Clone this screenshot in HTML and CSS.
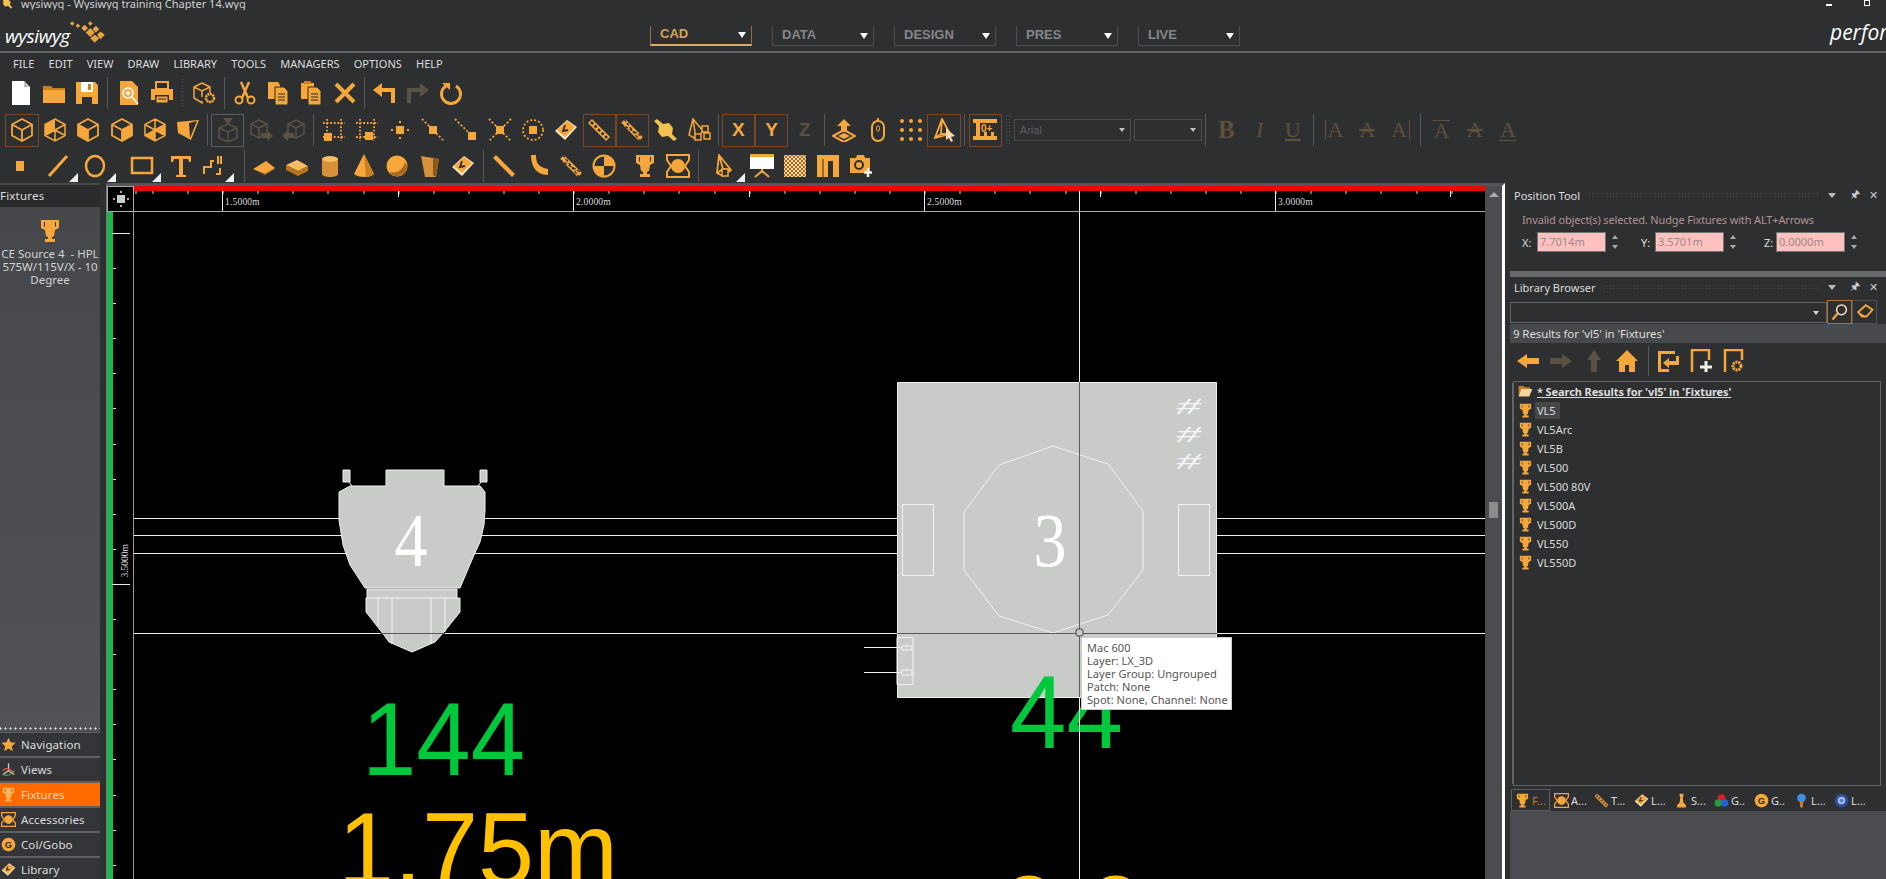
FILE: index.html
```html
<!DOCTYPE html>
<html lang="en">
<head>
<meta charset="utf-8">
<title>wysiwyg - Wysiwyg training Chapter 14.wyg</title>
<link rel="stylesheet" href="styles.css">
</head>
<body>
<svg class="defs" width="0" height="0" aria-hidden="true">
  <symbol id="new" viewBox="0 0 24 24"><path d="M3 0h12l6 6v18H3z" fill="#fff"/><path d="M15 0l6 6h-6z" fill="#bbb"/></symbol>
  <symbol id="folder" viewBox="0 0 24 24"><path d="M1 5h8l2 2h12v3H1z" fill="#c9801f"/><path d="M1 9h22v13H1z" fill="currentColor"/></symbol>
  <symbol id="save" viewBox="0 0 24 24"><path d="M1 1h19l3 3v19H1z" fill="currentColor"/><path d="M6 1h12v10H6z" fill="#fff"/><path d="M7 16h10v7H7z" fill="#2d2f31"/><path d="M13 3h3v6h-3z" fill="#c9801f"/></symbol>
  <symbol id="preview" viewBox="0 0 24 24"><path d="M3 0h12l6 6v18H3z" fill="currentColor"/><circle cx="11" cy="12" r="5" fill="none" stroke="#fff" stroke-width="1.5"/><path d="M15 16l6 7M8.500 12h5M11 9.500v5" stroke="#fff" stroke-width="1.500"/></symbol>
  <symbol id="print" viewBox="0 0 24 24"><path d="M6 1h12v7H6z" fill="none" stroke="currentColor" stroke-width="2"/><path d="M1 8h22v11h-4v-5H5v5H1z" fill="currentColor"/><path d="M6 15h12v7H6z" fill="currentColor" stroke="#2d2f31"/><path d="M8 18h8" stroke="#2d2f31"/></symbol>
  <symbol id="boxgear" viewBox="0 0 24 24"><path d="M10 2l8 4v6M10 2L2 6v11l8 5v-2M2 6l8 4 8-4M10 10v6" fill="none" stroke="currentColor" stroke-width="1.500"/><circle cx="18" cy="17" r="4" fill="none" stroke="currentColor" stroke-width="2.500" stroke-dasharray="2 .6"/></symbol>
  <symbol id="scissors" viewBox="0 0 24 24"><path d="M8 1l7 16M16 1L9 17" stroke="currentColor" stroke-width="2.500"/><circle cx="6" cy="19" r="3.500" fill="none" stroke="currentColor" stroke-width="2"/><circle cx="18" cy="19" r="3.500" fill="none" stroke="currentColor" stroke-width="2"/></symbol>
  <symbol id="copy" viewBox="0 0 24 24"><path d="M2 1h10l2 3v14H2z" fill="currentColor"/><path d="M9 6h9l4 4v14H9z" fill="currentColor" stroke="#2d2f31"/><path d="M12 13h7M12 16h7M12 19h7" stroke="#2d2f31"/></symbol>
  <symbol id="paste" viewBox="0 0 24 24"><path d="M2 2h13v16H2z" fill="currentColor"/><path d="M5 0h7v3H5z" fill="#c9801f"/><path d="M9 6h9l4 4v14H9z" fill="currentColor" stroke="#2d2f31"/><path d="M12 13h7M12 16h7M12 19h7" stroke="#2d2f31"/></symbol>
  <symbol id="close" viewBox="0 0 24 24"><path d="M3 3l18 18M21 3L3 21" stroke="currentColor" stroke-width="4"/></symbol>
  <symbol id="undo" viewBox="0 0 24 24"><path d="M21 22V9H5" fill="none" stroke="currentColor" stroke-width="4"/><path d="M10 2L1 9l9 7z" fill="currentColor"/></symbol>
  <symbol id="redo" viewBox="0 0 24 24"><path d="M3 22V9h16" fill="none" stroke="currentColor" stroke-width="4"/><path d="M14 2l9 7-9 7z" fill="currentColor"/></symbol>
  <symbol id="refresh" viewBox="0 0 24 24"><path d="M7 5a9.500 9.500 0 1 0 10 0" fill="none" stroke="currentColor" stroke-width="3"/><path d="M3 2h8v7z" fill="currentColor"/></symbol>
  <symbol id="cube" viewBox="0 0 24 24"><path d="M12 1l10 5.500v11L12 23 2 17.500v-11zM2 6.500L12 12l10-5.500M12 12v11" fill="none" stroke="currentColor" stroke-width="1.800"/></symbol>
  <symbol id="cubeA" viewBox="0 0 24 24"><path d="M12 1v11L2 17.500v-11z" fill="currentColor"/><path d="M12 1l10 5.500v11L12 23 2 17.500v-11zM12 12L2 6.500M12 12l10-5.500M12 12v11M12 12L2 17.500M12 12l10 5.500" fill="none" stroke="currentColor" stroke-width="1.500"/></symbol>
  <symbol id="cubeB" viewBox="0 0 24 24"><path d="M2 6.500v11L12 23V12z" fill="currentColor"/><path d="M12 1l10 5.500v11L12 23 2 17.500v-11zM2 6.500L12 12l10-5.500M12 12v11" fill="none" stroke="currentColor" stroke-width="1.800"/></symbol>
  <symbol id="cubeC" viewBox="0 0 24 24"><path d="M22 6.500v11L12 23V12z" fill="currentColor"/><path d="M12 1l10 5.500v11L12 23 2 17.500v-11zM2 6.500L12 12l10-5.500M12 12v11" fill="none" stroke="currentColor" stroke-width="1.800"/></symbol>
  <symbol id="cubeD" viewBox="0 0 24 24"><path d="M12 12l10-5.500v11zM12 12L2 17.500 12 23z" fill="currentColor"/><path d="M12 1l10 5.500v11L12 23 2 17.500v-11zM12 12L2 6.500M12 12l10-5.500M12 12v11M12 1v11M12 12L2 17.500M12 12l10 5.500" fill="none" stroke="currentColor" stroke-width="1.500"/></symbol>
  <symbol id="wedge" viewBox="0 0 24 24"><path d="M1 4l22-2-8 20L2 15z" fill="currentColor"/><path d="M13 5l8-2-7 17z" fill="#2d2f31"/></symbol>
  <symbol id="cubeDown" viewBox="0 0 24 24"><path d="M12 6l9 4v10l-9 4-9-4V10zM3 10l9 4 9-4M12 14v10" fill="none" stroke="currentColor" stroke-width="1.500"/><path d="M7 0h10l-5 7z" fill="currentColor"/></symbol>
  <symbol id="cubeRight" viewBox="0 0 24 24"><path d="M10 2l8 4v10l-8 4-8-4V6zM2 6l8 4 8-4M10 10v10" fill="none" stroke="currentColor" stroke-width="1.500"/><path d="M12 15h6v-3l6 6-6 5v-3h-6z" fill="currentColor"/></symbol>
  <symbol id="cubeLeft" viewBox="0 0 24 24"><path d="M14 2l8 4v10l-8 4-8-4V6zM6 6l8 4 8-4M14 10v10" fill="none" stroke="currentColor" stroke-width="1.500"/><path d="M12 15H6v-3l-6 6 6 5v-3h6z" fill="currentColor"/></symbol>
  <symbol id="snapA" viewBox="0 0 24 24"><path d="M5 1v22M19 1v22M1 5h22M1 19h22" stroke="currentColor" stroke-width="1.800" stroke-dasharray="1.800 1.800"/><path d="M2 15h8v8H2z" fill="currentColor"/></symbol>
  <symbol id="snapB" viewBox="0 0 24 24"><path d="M5 1v22M19 1v22M1 5h22M1 19h22" stroke="currentColor" stroke-width="1.800" stroke-dasharray="1.800 1.800"/><path d="M10 14h8v8h-8z" fill="currentColor"/></symbol>
  <symbol id="snapC" viewBox="0 0 24 24"><path d="M8 8h8v8H8z" fill="currentColor"/><path d="M12 3v2M12 19v2M3 12h2M19 12h2" stroke="currentColor" stroke-width="2"/></symbol>
  <symbol id="snapD" viewBox="0 0 24 24"><path d="M1 1l22 22" stroke="currentColor" stroke-width="1.800" stroke-dasharray="2 2"/><path d="M8 8h8v8H8z" fill="currentColor"/></symbol>
  <symbol id="snapE" viewBox="0 0 24 24"><path d="M1 1l16 16" stroke="currentColor" stroke-width="1.800" stroke-dasharray="2 2"/><path d="M14 14h8v8h-8z" fill="currentColor"/></symbol>
  <symbol id="snapF" viewBox="0 0 24 24"><path d="M1 1l22 22M23 1L1 23" stroke="currentColor" stroke-width="1.800" stroke-dasharray="2 2"/><path d="M8 8h8v8H8z" fill="currentColor"/></symbol>
  <symbol id="snapG" viewBox="0 0 24 24"><circle cx="12" cy="12" r="10" fill="none" stroke="currentColor" stroke-width="1.800" stroke-dasharray="2 2"/><path d="M8 8h8v8H8z" fill="currentColor"/></symbol>
  <symbol id="book" viewBox="0 0 24 24"><path d="M1 13L13 2l10 7-12 13z" fill="#f8e7c2"/><path d="M3 12l10-9 8 6-10 10z" fill="currentColor"/><path d="M11 7l-2 6 5-1" fill="none" stroke="#2d2f31" stroke-width="1.800"/></symbol>
  <symbol id="beam" viewBox="0 0 24 24"><path d="M1 5l4-4 18 18-4 4z" fill="currentColor"/><path d="M4 4l16 16" stroke="#2d2f31" stroke-width="2.500" stroke-dasharray="3 2"/></symbol>
  <symbol id="beamX" viewBox="0 0 24 24"><path d="M1 5l4-4 18 18-4 4z" fill="currentColor"/><path d="M4 1l16 22M1 6l22 13" stroke="#2d2f31" stroke-width="1.500" stroke-dasharray="3 2"/></symbol>
  <symbol id="diamond" viewBox="0 0 24 24"><path d="M3 1l6 5 6-1 4 5-1 6 5 5-3 2-6-5-6 1-4-5 1-6-5-5z" fill="#f3c14d"/></symbol>
  <symbol id="cone3" viewBox="0 0 24 24"><path d="M6 1l10 12-7 8zM6 1L2 17l7 4" fill="none" stroke="currentColor" stroke-width="1.500"/><path d="M15 8h6v6h-6zM8 16h6v6H8zM17 15h6v6h-6z" fill="#2d2f31" stroke="currentColor" stroke-width="1.500"/></symbol>
  <symbol id="updown" viewBox="0 0 24 24"><path d="M12 1l7 7h-4v6H9V8H5z" fill="currentColor"/><path d="M1 18l11-6 11 6-11 6z" fill="none" stroke="currentColor" stroke-width="2"/><path d="M6 18l6-3 6 3-6 3z" fill="currentColor"/></symbol>
  <symbol id="mouse" viewBox="0 0 24 24"><rect x="6" y="3" width="12" height="20" rx="6" fill="none" stroke="currentColor" stroke-width="2"/><path d="M12 0v3" stroke="currentColor" stroke-width="2"/><rect x="10.500" y="8" width="3" height="5" rx="1.500" fill="none" stroke="currentColor"/></symbol>
  <symbol id="dotsgrid" viewBox="0 0 24 24"><g fill="currentColor"><circle cx="3" cy="3" r="2"/><circle cx="12" cy="3" r="2"/><circle cx="21" cy="3" r="2"/><circle cx="3" cy="12" r="2"/><circle cx="12" cy="12" r="2"/><circle cx="21" cy="12" r="2"/><circle cx="3" cy="21" r="2"/><circle cx="12" cy="21" r="2"/><circle cx="21" cy="21" r="2"/></g></symbol>
  <symbol id="conept" viewBox="0 0 24 24"><path d="M10 1l8 15-15 4zM10 1L9 16l-6 4M9 16l9 0" fill="none" stroke="currentColor" stroke-width="1.800"/><path d="M14 10l9 8-4 1 2 4-2 1-2-4-3 2z" fill="#f8d9a5"/></symbol>
  <symbol id="numbered" viewBox="0 0 24 24"><path d="M0 1h24v4H0zM0 18h24v4H0zM3 5h4v13H3zM18 14h3v4h-3zM11 14h3v4h-3z" fill="currentColor"/><text x="8" y="14" font-size="10" font-weight="700" font-family="Liberation Sans" fill="currentColor">0+</text></symbol>
  <symbol id="square" viewBox="0 0 24 24"><path d="M8 7h8v10H8z" fill="currentColor"/></symbol>
  <symbol id="line" viewBox="0 0 24 24"><path d="M3 22L21 2" stroke="currentColor" stroke-width="3"/></symbol>
  <symbol id="ellipse" viewBox="0 0 24 24"><ellipse cx="11" cy="12" rx="9" ry="10" fill="none" stroke="currentColor" stroke-width="2.500"/></symbol>
  <symbol id="rect" viewBox="0 0 24 24"><path d="M2 4h20v15H2z" fill="none" stroke="currentColor" stroke-width="2.500"/></symbol>
  <symbol id="tee" viewBox="0 0 24 24"><path d="M2 2h20v6h-2l-1-3h-5v16h3v2H7v-2h3V5H5L4 8H2z" fill="currentColor"/></symbol>
  <symbol id="dims" viewBox="0 0 24 24"><path d="M2 20v-7h7V7h3M18 14v6h-4M16 2v8M19 2v8" fill="none" stroke="currentColor" stroke-width="2"/></symbol>
  <symbol id="plane" viewBox="0 0 24 24"><path d="M1 15L14 7l9 7-10 6z" fill="currentColor"/><path d="M1 15l12 5 10-6v1l-10 6z" fill="#a86a1a"/></symbol>
  <symbol id="slab" viewBox="0 0 24 24"><path d="M1 11l11-5 11 6-10 5z" fill="#f7bd62"/><path d="M1 11l12 6v5L1 16zM13 17l10-5v5l-10 5z" fill="#b7751f"/></symbol>
  <symbol id="cyl" viewBox="0 0 24 24"><path d="M4 5v15c0 4 16 4 16 0V5z" fill="#d6913a"/><ellipse cx="12" cy="5" rx="8" ry="3" fill="#f7bd62"/></symbol>
  <symbol id="cone" viewBox="0 0 24 24"><path d="M12 0l10 20c-4 4-16 4-20 0z" fill="currentColor"/><path d="M12 0l2 23c4 0 6-1 8-3z" fill="#c9801f"/></symbol>
  <symbol id="sphere" viewBox="0 0 24 24"><circle cx="12" cy="12" r="10.500" fill="currentColor"/><path d="M22 12A10 10 0 0 1 4 18c8 2 14-2 16-10z" fill="#a86a1a"/></symbol>
  <symbol id="wall" viewBox="0 0 24 24"><path d="M3 2l12 2 6 1-3 18H7z" fill="#d6913a"/><path d="M15 4l6 1-3 18-3-2z" fill="#8c5a18"/></symbol>
  <symbol id="curve" viewBox="0 0 24 24"><path d="M5 1h5c0 8 2 12 12 14v6C10 21 5 12 5 1z" fill="currentColor"/></symbol>
  <symbol id="barline" viewBox="0 0 24 24"><path d="M1 4l3-3 19 19-3 3z" fill="currentColor"/></symbol>
  <symbol id="target" viewBox="0 0 24 24"><circle cx="12" cy="12" r="10.500" fill="none" stroke="currentColor" stroke-width="2"/><path d="M12 12V2a10 10 0 0 1 10 10zM12 12v10A10 10 0 0 1 2 12z" fill="currentColor"/></symbol>
  <symbol id="trophy" viewBox="0 0 24 24"><path d="M3 1h18v8l-4 2-1 6-2 1v2h3v3H7v-3h3v-2l-2-1-1-6-4-2z" fill="currentColor"/><path d="M6 3v4l1 1V3zM18 3v4l-1 1V3z" fill="#2d2f31"/></symbol>
  <symbol id="fixture" viewBox="0 0 24 24"><path d="M1 1h22v5l-4 6 4 6v5H1v-5l4-6-4-6z" fill="none" stroke="currentColor" stroke-width="2"/><circle cx="12" cy="12" r="7" fill="currentColor"/></symbol>
  <symbol id="ptr" viewBox="0 0 24 24"><path d="M5 1l12 15-8 6-6-3zM5 1l4 14-6 4M9 15l8 1" fill="none" stroke="currentColor" stroke-width="1.800"/><path d="M8 15h6v7H8z" fill="#2d2f31" stroke="currentColor" stroke-width="1.500"/></symbol>
  <symbol id="screen" viewBox="0 0 24 24"><path d="M0 1h24v14H0z" fill="#fff"/><path d="M0 0h24v2H0zM12 15v4M12 17l-7 6M12 17l7 6" stroke="currentColor" stroke-width="2" fill="none"/></symbol>
  <symbol id="checker" viewBox="0 0 24 24"><defs><pattern id="chk" width="4" height="4" patternUnits="userSpaceOnUse"><path d="M0 0h4v4H0z" fill="#f8d9a5"/><path d="M0 0h2v2H0zM2 2h2v2H2z" fill="#a86a1a"/></pattern></defs><path d="M1 1h22v22H1z" fill="url(#chk)"/></symbol>
  <symbol id="door" viewBox="0 0 24 24"><path d="M1 1h22v22h-6V7h-5v16H1z" fill="currentColor"/><path d="M7 5v18" stroke="#2d2f31"/></symbol>
  <symbol id="camera" viewBox="0 0 24 24"><path d="M1 4h6l1-3h7l1 3h5v15H1z" fill="currentColor"/><circle cx="10" cy="11" r="4" fill="none" stroke="#2d2f31" stroke-width="2"/><path d="M19 14v9M15 18.500h8" stroke="#f3f0e8" stroke-width="2.500"/></symbol>
  <symbol id="star" viewBox="0 0 24 24"><path d="M12 1l3.300 7.500 8 .8-6 5.300 1.800 8L12 18.500 4.900 22.600l1.800-8-6-5.300 8-.8z" fill="currentColor"/></symbol>
  <symbol id="views" viewBox="0 0 24 24"><path d="M12 2v12M12 14L3 20M12 14l9 6" stroke="#ccc" stroke-width="2"/><path d="M3 14c5-6 13-4 18 6" fill="none" stroke="#e54" stroke-width="2"/><path d="M3 20c5 2 13 2 18-6" fill="none" stroke="#4b4" stroke-width="2"/></symbol>
  <symbol id="gobo" viewBox="0 0 24 24"><circle cx="12" cy="12" r="11" fill="currentColor"/><text x="12" y="17" font-size="15" font-weight="700" text-anchor="middle" font-family="Liberation Sans" fill="#2d2f31">G</text></symbol>
  <symbol id="pawn" viewBox="0 0 24 24"><path d="M9 1h6v4l-1 2 1 8 4 4v4H5v-4l4-4 1-8-1-2z" fill="currentColor"/></symbol>
  <symbol id="rgb" viewBox="0 0 24 24"><circle cx="12" cy="8" r="6" fill="#e21d1d"/><circle cx="7" cy="16" r="6" fill="#2a9a3a"/><circle cx="17" cy="16" r="6" fill="#2560d8"/></symbol>
  <symbol id="bulb" viewBox="0 0 24 24"><circle cx="12" cy="8" r="7" fill="#3e8fe0"/><path d="M9 13h6l-1 10h-4z" fill="#c9801f"/></symbol>
  <symbol id="lens" viewBox="0 0 24 24"><circle cx="12" cy="12" r="11" fill="#2c4f9a"/><circle cx="12" cy="12" r="6" fill="#a9bde6"/><circle cx="12" cy="12" r="3" fill="#5d7fc5"/></symbol>
  <symbol id="arrowL" viewBox="0 0 24 24"><path d="M1 12l10-7v4h12v6H11v4z" fill="currentColor"/></symbol>
  <symbol id="arrowR" viewBox="0 0 24 24"><path d="M23 12l-10-7v4H1v6h12v4z" fill="currentColor"/></symbol>
  <symbol id="arrowU" viewBox="0 0 24 24"><path d="M12 1l7 10h-4v12H9V11H5z" fill="currentColor"/></symbol>
  <symbol id="home" viewBox="0 0 24 24"><path d="M12 1L1 12h3v11h6v-7h4v7h6V12h3z" fill="currentColor"/></symbol>
  <symbol id="libIn" viewBox="0 0 24 24"><path d="M2 2h17v3H5v15h8v3H2z" fill="currentColor"/><path d="M20 7h3v9H13v3l-6-5 6-5v3h7z" fill="currentColor"/></symbol>
  <symbol id="libNew" viewBox="0 0 24 24"><path d="M3 23V1h17v10" fill="none" stroke="currentColor" stroke-width="2.500"/><path d="M17 12v11M11 18h12" stroke="#f3f0e8" stroke-width="3"/></symbol>
  <symbol id="libGear" viewBox="0 0 24 24"><path d="M3 23V1h17v10" fill="none" stroke="currentColor" stroke-width="2.500"/><circle cx="15" cy="17" r="4" fill="none" stroke="currentColor" stroke-width="3" stroke-dasharray="2 .8"/></symbol>
  <symbol id="search" viewBox="0 0 24 24"><circle cx="14" cy="9" r="6.500" fill="none" stroke="#f3e1c2" stroke-width="2"/><path d="M9 14l-7 8" stroke="currentColor" stroke-width="3"/></symbol>
  <symbol id="eraser" viewBox="0 0 24 24"><path d="M3 12L13 3l9 6-8 9H8z" fill="none" stroke="currentColor" stroke-width="2.500"/><path d="M3 12l11 6-6 0z" fill="currentColor"/></symbol>
  <symbol id="folderOpen" viewBox="0 0 24 24"><path d="M1 3h8l2 2h8v3H5L1 20z" fill="#c9801f"/><path d="M5 8h18l-5 12H1z" fill="#f7d59a"/></symbol>
</svg>

<header class="titlebar">
  <svg class="app-mini"><use href="#diamond"/></svg>
  <span class="title-text">wysiwyg - Wysiwyg training Chapter 14.wyg</span>
  <span class="winbtns"><i class="win-min"></i><i class="win-rest"></i></span>
</header>

<div class="brandbar">
  <div class="logo">
    <span class="logo-text">wysiwyg</span>
    <svg class="logo-mark" viewBox="0 0 32 22">
      <path fill="#e9a441" d="M0 3l2-2 2 2-2 2zM5 5l2-2 2 2-2 2zM10 7l3-3 3 3-3 3zM16 3l2-2 2 2-2 2zM14 11l4-4 4 4-4 4zM20 8l3-3 3 3-3 3zM24 13l3-3 4 3-4 4zM18 16l4-3 4 3-4 4z"/>
    </svg>
  </div>
  <nav class="modes">
    <div class="mode active"><span>CAD</span><i class="mode-arrow"></i></div>
    <div class="mode"><span>DATA</span><i class="mode-arrow"></i></div>
    <div class="mode"><span>DESIGN</span><i class="mode-arrow"></i></div>
    <div class="mode"><span>PRES</span><i class="mode-arrow"></i></div>
    <div class="mode"><span>LIVE</span><i class="mode-arrow"></i></div>
  </nav>
  <div class="brand-right">perfor</div>
</div>

<nav class="menubar">
  <span>FILE</span><span>EDIT</span><span>VIEW</span><span>DRAW</span><span>LIBRARY</span><span>TOOLS</span><span>MANAGERS</span><span>OPTIONS</span><span>HELP</span>
</nav>

<div class="toolbar row1">
  <div class="cell"><svg class="ic"><use href="#new"/></svg></div>
  <div class="cell"><svg class="ic"><use href="#folder"/></svg></div>
  <div class="cell"><svg class="ic"><use href="#save"/></svg></div>
  <div class="sep w8"></div>
  <div class="cell"><svg class="ic"><use href="#preview"/></svg></div>
  <div class="cell"><svg class="ic"><use href="#print"/></svg></div>
  <div class="grip g9"></div>
  <div class="cell"><svg class="ic"><use href="#boxgear"/></svg></div>
  <div class="sep w8"></div>
  <div class="cell"><svg class="ic"><use href="#scissors"/></svg></div>
  <div class="cell"><svg class="ic"><use href="#copy"/></svg></div>
  <div class="cell"><svg class="ic"><use href="#paste"/></svg></div>
  <div class="cell"><svg class="ic"><use href="#close"/></svg></div>
  <div class="sep"></div>
  <div class="cell"><svg class="ic"><use href="#undo"/></svg></div>
  <div class="cell dim"><svg class="ic"><use href="#redo"/></svg></div>
  <div class="cell"><svg class="ic"><use href="#refresh"/></svg></div>
</div>

<div class="toolbar row2">
  <div class="cell boxed"><svg class="ic"><use href="#cube"/></svg></div>
  <div class="cell"><svg class="ic"><use href="#cubeA"/></svg></div>
  <div class="cell"><svg class="ic"><use href="#cubeB"/></svg></div>
  <div class="cell"><svg class="ic"><use href="#cubeC"/></svg></div>
  <div class="cell"><svg class="ic"><use href="#cubeD"/></svg></div>
  <div class="cell"><svg class="ic"><use href="#wedge"/></svg></div>
  <div class="sep"></div>
  <div class="cell dim boxed-gray"><svg class="ic"><use href="#cubeDown"/></svg></div>
  <div class="cell dim"><svg class="ic"><use href="#cubeRight"/></svg></div>
  <div class="cell dim"><svg class="ic"><use href="#cubeLeft"/></svg></div>
  <div class="sep"></div>
  <div class="cell"><svg class="ic"><use href="#snapA"/></svg></div>
  <div class="cell"><svg class="ic"><use href="#snapB"/></svg></div>
  <div class="cell"><svg class="ic"><use href="#snapC"/></svg></div>
  <div class="cell"><svg class="ic"><use href="#snapD"/></svg></div>
  <div class="cell"><svg class="ic"><use href="#snapE"/></svg></div>
  <div class="cell"><svg class="ic"><use href="#snapF"/></svg></div>
  <div class="cell"><svg class="ic"><use href="#snapG"/></svg></div>
  <div class="cell"><svg class="ic"><use href="#book"/></svg></div>
  <div class="cell boxed"><svg class="ic"><use href="#beam"/></svg></div>
  <div class="cell boxed"><svg class="ic"><use href="#beamX"/></svg></div>
  <div class="cell"><svg class="ic"><use href="#diamond"/></svg></div>
  <div class="cell"><svg class="ic"><use href="#cone3"/></svg></div>
  <div class="sep"></div>
  <div class="cell boxed letter">X</div>
  <div class="cell boxed letter">Y</div>
  <div class="cell letter dim">Z</div>
  <div class="sep"></div>
  <div class="cell"><svg class="ic"><use href="#updown"/></svg></div>
  <div class="cell"><svg class="ic"><use href="#mouse"/></svg></div>
  <div class="cell"><svg class="ic"><use href="#dotsgrid"/></svg></div>
  <div class="cell boxed"><svg class="ic"><use href="#conept"/></svg></div>
  <div class="sep w8"></div>
  <div class="cell boxed"><svg class="ic"><use href="#numbered"/></svg></div>
  <div class="grip g12"></div>
  <div class="select font"><span>Arial</span><i></i></div>
  <div class="select size"><span></span><i></i></div>
  <div class="sep w8"></div>
  <div class="cell serif bold">B</div>
  <div class="cell serif ital">I</div>
  <div class="cell serif under">U</div>
  <div class="sep w8"></div>
  <div class="cell serif"><span class="a-left">A</span></div>
  <div class="cell serif"><span class="a-mid">A</span></div>
  <div class="cell serif"><span class="a-right">A</span></div>
  <div class="sep w8"></div>
  <div class="cell serif"><span class="a-top">A</span></div>
  <div class="cell serif"><span class="a-strike">A</span></div>
  <div class="cell serif"><span class="a-bottom">A</span></div>
</div>

<div class="toolbar row3">
  <div class="cell"><svg class="ic"><use href="#square"/></svg></div>
  <div class="cell m5 tri"><svg class="ic"><use href="#line"/></svg></div>
  <div class="cell m5 tri"><svg class="ic"><use href="#ellipse"/></svg></div>
  <div class="cell m12 tri"><svg class="ic"><use href="#rect"/></svg></div>
  <div class="cell m6"><svg class="ic"><use href="#tee"/></svg></div>
  <div class="cell tri"><svg class="ic"><use href="#dims"/></svg></div>
  <div class="sep w17"></div>
  <div class="cell"><svg class="ic"><use href="#plane"/></svg></div>
  <div class="cell"><svg class="ic"><use href="#slab"/></svg></div>
  <div class="cell"><svg class="ic"><use href="#cyl"/></svg></div>
  <div class="cell"><svg class="ic"><use href="#cone"/></svg></div>
  <div class="cell"><svg class="ic"><use href="#sphere"/></svg></div>
  <div class="cell"><svg class="ic"><use href="#wall"/></svg></div>
  <div class="cell"><svg class="ic"><use href="#book"/></svg></div>
  <div class="sep w8"></div>
  <div class="cell"><svg class="ic"><use href="#barline"/></svg></div>
  <div class="cell"><svg class="ic"><use href="#curve"/></svg></div>
  <div class="cell"><svg class="ic"><use href="#beamX"/></svg></div>
  <div class="cell"><svg class="ic"><use href="#target"/></svg></div>
  <div class="cell m8"><svg class="ic"><use href="#trophy"/></svg></div>
  <div class="cell"><svg class="ic"><use href="#fixture"/></svg></div>
  <div class="sep w8"></div>
  <div class="cell m6 tri"><svg class="ic"><use href="#ptr"/></svg></div>
  <div class="cell m3"><svg class="ic"><use href="#screen"/></svg></div>
  <div class="cell"><svg class="ic"><use href="#checker"/></svg></div>
  <div class="cell"><svg class="ic"><use href="#door"/></svg></div>
  <div class="cell"><svg class="ic"><use href="#camera"/></svg></div>
</div>

<main class="workspace">
  <aside class="left">
    <div class="left-head">Fixtures</div>
    <div class="left-info">
      <svg class="left-ic"><use href="#trophy"/></svg>
      <p>CE Source 4 &nbsp;- HPL 575W/115V/X - 10 Degree</p>
    </div>
    <div class="left-grip"></div>
    <div class="navbtn"><svg><use href="#star"/></svg>Navigation</div>
    <div class="navbtn"><svg><use href="#views"/></svg>Views</div>
    <div class="navbtn on"><svg><use href="#trophy"/></svg>Fixtures</div>
    <div class="navbtn"><svg><use href="#fixture"/></svg>Accessories</div>
    <div class="navbtn"><svg><use href="#gobo"/></svg>Col/Gobo</div>
    <div class="navbtn"><svg><use href="#book"/></svg>Library</div>
  </aside>

  <section class="canvas">
    <div class="corner"><i></i></div>
    <div class="hruler">
      <div class="hticks"></div>
      <span class="mark" style="left:88px"></span><span class="lab" style="left:91px">1.5000m</span>
      <span class="mark" style="left:439px"></span><span class="lab" style="left:442px">2.0000m</span>
      <span class="mark" style="left:790px"></span><span class="lab" style="left:793px">2.5000m</span>
      <span class="mark" style="left:1141px"></span><span class="lab" style="left:1144px">3.0000m</span>
      <span class="mid" style="left:264px"></span><span class="mid" style="left:615px"></span><span class="mid" style="left:966px"></span><span class="mid" style="left:1316px"></span>
      <span class="mark" style="left:945px"></span>
    </div>
    <div class="scroll"><i class="sc-up"></i><i class="sc-thumb"></i></div>
    <div class="vruler">
      <div class="vticks"></div>
      <span class="vmark" style="top:21px"></span>
      <span class="vmark" style="top:372px"></span>
      <span class="vlab">3.5000m</span>
    </div>
    <svg class="view" viewBox="134 212 1351 667">
      <g class="wire">
        <path d="M134 518.500H1485M134 535.500H1485M134 553.500H1485M134 633.500H1485"/>
      </g>
      <g class="fix">
        <path d="M343 470h7v12h-7zM480 470h7v12h-7z"/>
        <path d="M339 492l11-6h36v-16h58v16h36l5 6v18l-1 15-4 17-6 13-14 33H365l-15-23-7-20-4-25z"/>
        <path d="M367 589h90v9h3v14l-16 20-9 10-23 10-23-10-5-7-18-23v-14h1z"/>
      </g>
      <g class="thin">
        <path d="M378 598v28M392 598v46M431 598v46M445 598v34M367 598h90M349 482l3 4M481 482l-3 4"/>
      </g>
      <path class="dark" d="M380 633.500h65"/>
      <text class="num" x="411" y="566" text-anchor="middle" font-size="77" textLength="33" lengthAdjust="spacingAndGlyphs">4</text>

      <path class="fix" d="M897.500 382.500h319v315h-319z"/>
      <path class="thin" d="M902.500 504.500h31v71h-31zM1178.500 504.500h31v71h-31zM1053 446l55 18 35 47v59l-35 45-55 18-54-17-35-46v-58l35-47zM897 637.500h16v47h-16zM864 647.500h38M864 672.500h38M902 646h10v4h-10zM902 670h10v5h-10z"/>
      <text class="num" x="1050" y="566" text-anchor="middle" font-size="77" textLength="33" lengthAdjust="spacingAndGlyphs">3</text>
      <text class="hash" x="1176" y="414" textLength="25" lengthAdjust="spacingAndGlyphs">#</text>
      <text class="hash" x="1176" y="442" textLength="25" lengthAdjust="spacingAndGlyphs">#</text>
      <text class="hash" x="1176" y="469" textLength="25" lengthAdjust="spacingAndGlyphs">#</text>
      <path class="dark" d="M897 633.500h320"/>
      <text class="big green" x="362" y="775" textLength="163" lengthAdjust="spacingAndGlyphs">144</text>
      <text class="big green" x="1010" y="748" textLength="113" lengthAdjust="spacingAndGlyphs">44</text>
      <text class="big amber" x="338" y="885" textLength="280" lengthAdjust="spacingAndGlyphs">1.75m</text>
      <text class="big amber" x="1000" y="948">0.0</text>
      <path class="wire" d="M1079.500 212V382M1079.500 697V879"/>
      <path class="dark" d="M1079.500 382v315"/>
      <rect class="cursor" x="1076" y="629" width="7" height="7" rx="2"/>
    </svg>
    <div class="tooltip">Mac 600<br>Layer: LX_3D<br>Layer Group: Ungrouped<br>Patch: None<br>Spot: None, Channel: None</div>
  </section>

  <aside class="right">
    <div class="dock-head"><span>Position Tool</span><i class="dock-dots"></i><i class="dock-menu"></i><b class="dock-pin">&#x1F588;</b><b class="dock-x">&#x2715;</b></div>
    <p class="invalid">Invalid object(s) selected. Nudge Fixtures with ALT+Arrows</p>
    <div class="fields">
      <label class="fx">X:</label><span class="inp">7.7014m</span><i class="spin"></i>
      <label class="fy">Y:</label><span class="inp">3.5701m</span><i class="spin"></i>
      <label class="fz">Z:</label><span class="inp">0.0000m</span><i class="spin"></i>
    </div>
    <div class="splitter"></div>
    <div class="dock-head lib"><span>Library Browser</span><i class="dock-dots"></i><i class="dock-menu"></i><b class="dock-pin">&#x1F588;</b><b class="dock-x">&#x2715;</b></div>
    <div class="searchrow">
      <div class="searchbox"><i></i></div>
      <div class="sbtn on"><svg><use href="#search"/></svg></div>
      <div class="sbtn"><svg><use href="#eraser"/></svg></div>
    </div>
    <div class="results">9 Results for 'vl5' in 'Fixtures'</div>
    <div class="libnav">
      <svg class="lb a"><use href="#arrowL"/></svg>
      <svg class="lb b dim"><use href="#arrowR"/></svg>
      <svg class="lb c dim"><use href="#arrowU"/></svg>
      <svg class="lb d"><use href="#home"/></svg>
      <i class="libsep"></i>
      <svg class="lb e"><use href="#libIn"/></svg>
      <svg class="lb f"><use href="#libNew"/></svg>
      <svg class="lb g"><use href="#libGear"/></svg>
    </div>
    <div class="tree">
      <div class="tree-head"><svg><use href="#folderOpen"/></svg><span>* Search Results for 'vl5' in 'Fixtures'</span></div>
      <div class="tree-item"><svg><use href="#trophy"/></svg><span class="sel">VL5</span></div>
      <div class="tree-item"><svg><use href="#trophy"/></svg><span>VL5Arc</span></div>
      <div class="tree-item"><svg><use href="#trophy"/></svg><span>VL5B</span></div>
      <div class="tree-item"><svg><use href="#trophy"/></svg><span>VL500</span></div>
      <div class="tree-item"><svg><use href="#trophy"/></svg><span>VL500 80V</span></div>
      <div class="tree-item"><svg><use href="#trophy"/></svg><span>VL500A</span></div>
      <div class="tree-item"><svg><use href="#trophy"/></svg><span>VL500D</span></div>
      <div class="tree-item"><svg><use href="#trophy"/></svg><span>VL550</span></div>
      <div class="tree-item"><svg><use href="#trophy"/></svg><span>VL550D</span></div>
    </div>
    <div class="tabs">
      <div class="tab on"><svg><use href="#trophy"/></svg><span>F...</span></div>
      <div class="tab"><svg><use href="#fixture"/></svg><span>A...</span></div>
      <div class="tab"><svg><use href="#beam"/></svg><span>T...</span></div>
      <div class="tab"><svg><use href="#book"/></svg><span>L...</span></div>
      <div class="tab"><svg><use href="#pawn"/></svg><span>S...</span></div>
      <div class="tab"><svg><use href="#rgb"/></svg><span>G..</span></div>
      <div class="tab"><svg><use href="#gobo"/></svg><span>G..</span></div>
      <div class="tab"><svg><use href="#bulb"/></svg><span>L...</span></div>
      <div class="tab"><svg><use href="#lens"/></svg><span>L...</span></div>
    </div>
    <div class="tabfill"></div>
  </aside>
</main>
</body>
</html>
```
FILE: styles.css
```css
* { box-sizing: border-box; }
html, body { margin: 0; padding: 0; }
body {
  width: 1886px; height: 879px; overflow: hidden;
  display: flex; flex-direction: column;
  background: #2d2f31; color: #d8d8d8;
  font-family: "Noto Sans", "Liberation Sans", sans-serif;
  font-size: 11px;
}
.defs { position: absolute; }
i { display: block; }

.titlebar { height: 10px; flex: none; display: flex; align-items: center; overflow: hidden; position: relative; }
.app-mini { width: 12px; height: 12px; color: #e9a441; margin: -4px 8px 0 1px; flex: none; }
.title-text { font-size: 11px; line-height: 10px; color: #d0d0d0; margin-top: -2px; }
.winbtns { margin-left: auto; display: flex; gap: 32px; padding-right: 16px; align-items: center; }
.win-min { width: 6px; height: 2px; background: #fff; margin-top: 0; }
.win-rest { width: 6px; height: 6px; border: 1px solid #fff; margin-top: -4px; }

.brandbar { height: 43px; flex: none; display: grid; grid-template-columns: 650px 590px 590px 1fr; border-bottom: 2px solid #626466; overflow: hidden; }
.logo { display: flex; align-items: flex-start; padding: 15px 0 0 5px; }
.logo-text { font-style: italic; font-size: 19px; line-height: 22px; color: #fff; letter-spacing: -.4px; font-family: "Open Sans", sans-serif; }
.logo-mark { width: 36px; height: 25px; margin: -5px 0 0 0; }
.modes { display: flex; gap: 20px; align-items: flex-start; padding-top: 16px; }
.mode { width: 102px; height: 20px; flex: none; border: 1px solid #4c4e50; border-top: 0; display: flex; justify-content: space-between; align-items: center; padding: 0 5px 0 9px; font: 700 13px "Liberation Sans", sans-serif; color: #85878a; }
.mode span { margin-top: -3px; }
.mode.active { color: #d9a35a; border-color: #8d7048; border-bottom: 2px solid #e0aa62; }
.mode-arrow { width: 0; height: 0; border: 4px solid transparent; border-top: 6px solid #fff; border-bottom: 0; }
.brand-right { grid-column: 4; font: italic 21px/24px "Open Sans", sans-serif; color: #fff; padding-top: 10px; white-space: nowrap; }

.menubar { height: 22px; flex: none; display: flex; align-items: center; padding: 0 0 2px 8px; font-size: 11px; color: #dcdcdc; }
.menubar span { padding: 0 5px; margin-right: 4.2px; }

.toolbar { flex: none; display: flex; align-items: center; color: #f5a73b; }
.row1 { height: 36px; padding-left: 4.4px; }
.row2 { height: 38px; padding-left: 5.4px; }
.row3 { height: 34px; padding-left: 3.4px; }
.cell { width: 33.2px; height: 33px; flex: none; display: flex; align-items: center; justify-content: center; position: relative; }
.ic { width: 24px; height: 24px; display: block; }
.dim { color: #5b5246; }
.boxed { border: 1px solid #7b4826; }
.boxed-gray { border: 1px solid #5c5e60; }
.letter { font: 700 19px "Liberation Sans", sans-serif; color: #f5a73b; }
.letter.dim { color: #5b5246; }
.sep { width: 6.5px; height: 32px; flex: none; display: flex; justify-content: center; }
.sep::before { content: ""; width: 1px; height: 100%; background: #56585a; }
.w8 { width: 8px; }
.w17 { width: 17px; justify-content: flex-end; padding-right: 3px; }
.m3 { margin-left: 3px; }
.m5 { margin-left: 5px; }
.m6 { margin-left: 6px; }
.m8 { margin-left: 8px; }
.m12 { margin-left: 12px; }
.tri::after { content: ""; position: absolute; right: -3px; bottom: 1px; width: 0; height: 0; border-left: 9px solid transparent; border-bottom: 9px solid #f0f0f0; }
.grip { height: 30px; flex: none; background: radial-gradient(circle, #55575a 0.8px, transparent 1px) 0 0 / 3px 3px; }
.g9 { width: 9px; background-clip: content-box; padding: 0 2px; }
.g12 { width: 12px; background-clip: content-box; padding: 0 3px 0 2px; }
.select { height: 22px; flex: none; border: 1px solid #4a4c4e; display: flex; align-items: center; justify-content: space-between; padding: 0 5px; color: #5c5e61; font: 11px "Liberation Sans", sans-serif; }
.select i { width: 0; height: 0; border: 3px solid transparent; border-top: 4px solid #c0c0c0; border-bottom: 0; }
.font { width: 117px; margin-right: 3px; }
.size { width: 68px; }
.serif { font: 400 22px "Liberation Serif", serif; color: #5f5039; }
.bold { font-weight: 700; font-size: 25px; }
.ital { font-style: italic; font-size: 22px; }
.under { text-decoration: underline; }
.a-left { border-left: 1px solid; padding-left: 2px; line-height: 20px; }
.a-right { border-right: 1px solid; padding-right: 2px; line-height: 20px; }
.a-mid { text-decoration: line-through; }
.a-top { border-top: 1px solid; padding: 0 1px; line-height: 20px; }
.a-strike { text-decoration: line-through; }
.a-bottom { border-bottom: 1px solid; padding: 0 1px; line-height: 20px; }

.workspace { flex: 1; min-height: 0; display: flex; }
.left { width: 100px; margin-right: 6px; flex: none; display: flex; flex-direction: column; gap: 2px; background: #47494c; overflow: hidden; }
.left-head { height: 22px; margin-top: 2px; margin-bottom: -2px; flex: none; background: #2a2b2d; line-height: 22px; color: #ddd; padding-left: 0; font-size: 11.5px; letter-spacing: .2px; }
.left-info { flex: 1; text-align: center; padding-top: 9px; background: linear-gradient(#45474a, #515356); }
.left-ic { width: 24px; height: 30px; color: #f5a73b; display: block; margin: 0 auto 1px; }
.left-info p { margin: 0; font-size: 11.5px; line-height: 13px; color: #d4d4d4; padding: 0 1px; }
.left-grip { height: 5px; margin-top: -7px; flex: none; background: radial-gradient(circle, #ddd .9px, transparent 1.2px) 23px 0 / 5px 5px repeat-x; background-color: #515356; }
.navbtn { height: 23px; flex: none; display: flex; align-items: center; background: #333538; box-shadow: 0 0 0 1px #5e6062; color: #ddd; font-size: 11.5px; letter-spacing: .1px; }
.navbtn svg { width: 15px; height: 15px; margin: 0 5px 0 1px; flex: none; color: #f5a73b; }
.navbtn.on { background: #ff6a00; color: #ffd9b0; }
.navbtn.on svg { color: #ffb45a; }
.navbtn:last-child { margin-bottom: -2px; }

.canvas { width: 1399px; flex: none; position: relative; display: grid; grid-template-columns: 27px 1351px 17px; grid-template-rows: 26px 1fr; background: #000; border-top: 3px solid #54565a; border-left: 1px solid #77797b; border-right: 3px solid #fff; overflow: hidden; }
.corner { background: #000; border: 1px solid #aaa; display: flex; align-items: center; justify-content: center; }
.corner i { width: 8px; height: 8px; background: #ccc; box-shadow: -7px 0 0 -3px #d9a35a, 7px 0 0 -3px #d9a35a, 0 -7px 0 -3px #d9a35a, 0 7px 0 -3px #d9a35a; }
.hruler { position: relative; background: #000; border-top: 5px solid #e80808; border-bottom: 1px solid #aaa; }
.hticks { height: 3px; background: repeating-linear-gradient(90deg, #ddd 0 1px, transparent 1px 35.1px) 18.5px 0; }
.mark { position: absolute; top: 0; bottom: 0; width: 1px; background: #eee; }
.mid { position: absolute; top: 0; height: 6px; width: 1px; background: #eee; }
.lab { position: absolute; top: 4px; font: 9.5px/14px "Liberation Serif", serif; color: #ddd; letter-spacing: .2px; }
.scroll { grid-column: 3; grid-row: 1 / 3; background: #4a4c4f; position: relative; }
.sc-up { position: absolute; left: 4px; top: 6px; width: 0; height: 0; border: 5px solid transparent; border-bottom: 5px solid #aaa; border-top: 0; }
.sc-thumb { position: absolute; left: 4px; top: 316px; width: 9px; height: 16px; background: #8a8c8e; }
.vruler { position: relative; border-right: 1px solid #999; background: #000; }
.vticks { position: absolute; left: 6px; top: 0; bottom: 0; width: 3px; background: repeating-linear-gradient(180deg, #ddd 0 1px, transparent 1px 35.1px) 0 21px; }
.vruler::before { content: ""; position: absolute; left: 0; top: 0; bottom: 0; width: 5.5px; background: #1cb84a; }
.vmark { position: absolute; left: 5px; width: 18px; height: 1px; background: #eee; }
.vlab { position: absolute; left: 11px; top: 332px; writing-mode: vertical-rl; transform: rotate(180deg); font: 9.5px/14px "Liberation Serif", serif; color: #ddd; }
.view { display: block; width: 1351px; height: 667px; }
.wire, path.wire { stroke: #eee; stroke-width: 1; fill: none; }
.fix { fill: #c9cbc9; stroke: #efefef; stroke-width: 1; }
.thin { fill: none; stroke: #f2f2f2; stroke-width: 1; }
.dark { fill: none; stroke: #5a5a5a; stroke-width: 1; }
.num { font-family: "Liberation Serif", serif; fill: #fff; }
.hash { font: italic 24px "Liberation Serif", serif; fill: #f5f5f5; }
.big { font-family: "Liberation Sans", sans-serif; font-size: 104px; }
.green { fill: #00c83c; }
.amber { fill: #ffc000; }
.cursor { fill: #c9cbc9; stroke: #444; }
.tooltip { position: absolute; left: 975px; top: 452px; width: 149px; height: 71px; background: #fff; padding: 3px 5px; font-size: 11px; line-height: 13px; letter-spacing: .05px; color: #555; box-shadow: 0 0 0 1px #ccc; white-space: nowrap; }

.right { width: 376px; margin-left: 5px; flex: none; display: flex; flex-direction: column; }
.dock-head { height: 22px; margin-top: 1px; flex: none; display: flex; align-items: center; padding-left: 4px; font-size: 11px; color: #ddd; white-space: nowrap; }
.dock-dots { flex: 1; height: 6px; margin-left: 8px; background: radial-gradient(circle, #484a4d .7px, transparent 1px) 0 0 / 3px 3px; }
.dock-menu { width: 0; height: 0; margin: 0 9px 0 10px; border: 4px solid transparent; border-top: 5px solid #bbb; border-bottom: 0; }
.dock-pin, .dock-x { font: 400 11px "DejaVu Sans", sans-serif; color: #ccc; width: 19px; text-align: center; }
.dock-x { margin-right: 3px; }
.invalid { height: 20px; margin: 4px 0 2px; padding-left: 12px; font-size: 11px; line-height: 20px; color: #b39393; letter-spacing: -.15px; }
.fields { height: 20px; flex: none; display: flex; align-items: center; padding-left: 12px; }
.fields label { flex: none; color: #ddd; font-size: 11px; }
.fx { width: 15px; }
.fy { width: 14px; margin-left: 22px; }
.fz { width: 12px; margin-left: 27px; }
.inp { width: 69px; height: 20px; flex: none; background: #ffc0c0; border: 1px solid #707274; color: #9a8a8a; padding-left: 2px; line-height: 18px; font-size: 11px; }
.spin { width: 8px; height: 14px; margin-left: 5px; flex: none; display: flex; flex-direction: column; justify-content: space-between; align-items: center; }
.spin::before, .spin::after { content: ""; width: 0; height: 0; border: 3.5px solid transparent; }
.spin::before { border-bottom: 4px solid #aaa; border-top: 0; }
.spin::after { border-top: 4px solid #aaa; border-bottom: 0; }
.splitter { height: 6px; margin-top: 19px; flex: none; background: #67696b; }
.dock-head.lib { height: 20px; margin-top: 0; }
.searchrow { height: 24px; margin-top: 3px; flex: none; display: flex; }
.searchbox { width: 317px; border: 1px solid #636567; margin: 2px 0 1px; display: flex; align-items: center; justify-content: flex-end; padding-right: 7px; }
.searchbox i { width: 0; height: 0; border: 3px solid transparent; border-top: 4px solid #ddd; border-bottom: 0; }
.sbtn { width: 25px; display: flex; align-items: center; justify-content: center; border: 1px solid #505254; color: #f5a73b; }
.sbtn.on { border: 1.5px solid #b0722a; }
.sbtn svg { width: 18px; height: 18px; }
.results { height: 19px; flex: none; background: #47494c; line-height: 19px; font-size: 11.5px; padding-left: 3px; color: #ddd; letter-spacing: -.1px; }
.libnav { height: 35px; flex: none; display: flex; align-items: center; color: #f5a73b; padding-left: 6px; }
.lb { width: 24px; height: 24px; flex: none; margin-right: 9px; }
.lb.dim { color: #5b5246; }
.libsep { width: 1px; height: 30px; background: #56585a; margin: 0 7px 0 0; }
.lb.e, .lb.f, .lb.g { margin-right: 9px; }
.tree { height: 405px; margin: 3px 5px 0 3px; flex: none; border: 1px solid #626466; box-shadow: -3px 0 0 -2px #626466; }
.tree-head, .tree-item { height: 19px; display: flex; align-items: center; padding-left: 4px; font-size: 11px; color: #dcdcdc; }
.tree svg { width: 15px; height: 15px; flex: none; color: #f5a73b; margin-right: 4px; }
.tree-head span { font-weight: 700; text-decoration: underline; letter-spacing: -.1px; }
.sel { background: #45474a; padding: 1px 4px 1px 2px; margin-left: -2px; }
.tabs { height: 25px; flex: none; display: flex; padding: 3px 0 0 1px; }
.tab { width: 40px; height: 22px; flex: none; display: flex; align-items: center; gap: 2px; padding-left: 3px; font-size: 11px; color: #ddd; }
.tab svg { width: 15px; height: 15px; flex: none; color: #f5a73b; }
.tab.on { border: 1px solid #5a5c5e; width: 39px; margin-right: 1px; color: #c9801f; }
.tabfill { flex: 1; background: #4a4c4f; }
```
